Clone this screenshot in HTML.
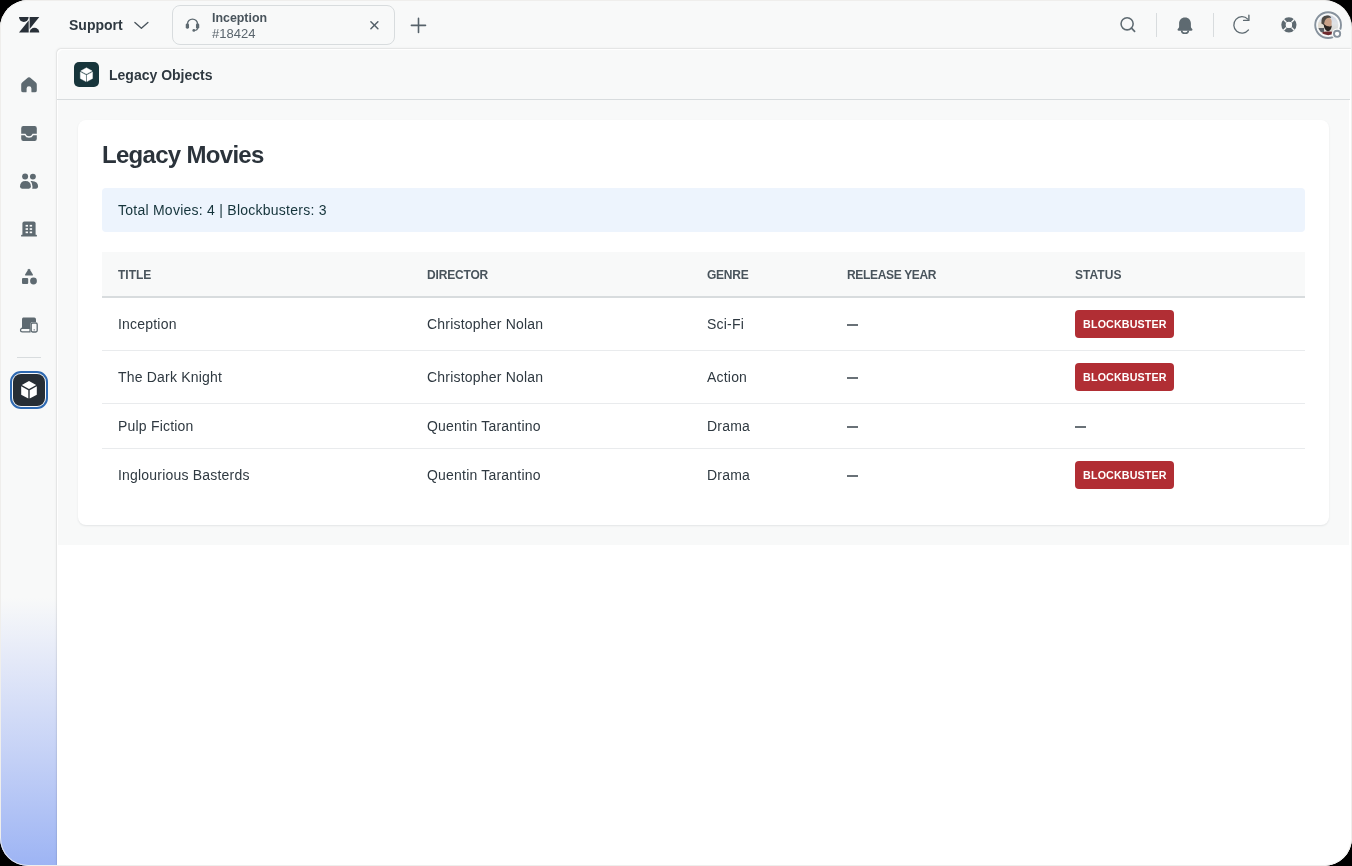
<!DOCTYPE html>
<html><head><meta charset="utf-8">
<style>
*{box-sizing:border-box;margin:0;padding:0}
html,body{width:1352px;height:866px;overflow:hidden;background:#000}
body{font-family:"Liberation Sans",sans-serif;color:#2f3941;position:relative;-webkit-font-smoothing:antialiased}
.t,.th,.td,.badge{will-change:transform}
.win{position:absolute;left:0;top:0;width:1352px;height:866px;border-radius:28px;background:#f8f9f9;overflow:hidden}
.frame{position:absolute;left:0;top:0;width:1352px;height:866px;border-radius:28px;border:1px solid #efeeec;pointer-events:none}
.abs{position:absolute}
svg{overflow:visible}
.side{position:absolute;left:0;top:0;width:57px;height:866px;background:linear-gradient(to bottom,#f8f9f9 0,#f8f9f9 598px,#e4e9f8 660px,#c3d0f6 760px,#9db4f4 866px)}
.panel{position:absolute;left:57px;top:49px;width:1295px;height:817px;background:#fff;border-top-left-radius:5px;box-shadow:-1px -1px 0 rgba(0,0,0,.045),-1px -1px 3px rgba(0,0,0,.05)}
.phead{position:absolute;left:0;top:0;width:1293px;height:51px;background:#f8f9f9;border-bottom:1px solid #d8dcde;border-top-left-radius:5px;box-shadow:inset 1px 1px 0 #fff}
.gray{position:absolute;left:0;top:51px;width:1292px;height:445px;background:#f8f9f9;box-shadow:inset 1px 0 0 #fff}
.card{position:absolute;left:21px;top:20px;width:1251px;height:405px;background:#fff;border-radius:8px;box-shadow:0 1px 2px rgba(47,57,65,.10)}
.t{position:absolute;white-space:nowrap}
.th{position:absolute;top:267.6px;font-size:12px;font-weight:bold;color:#49545c;white-space:nowrap;line-height:14px}
.td{position:absolute;font-size:14px;color:#2f3941;white-space:nowrap;line-height:16px;letter-spacing:.2px}
.dash{position:absolute;width:11px;height:1.5px;background:#697177}
.badge{position:absolute;left:1074.5px;width:99.2px;height:28px;background:#b12e34;border-radius:4px;color:#fff;font-size:10.7px;font-weight:bold;line-height:28px;text-align:center;letter-spacing:.15px;padding-left:.6px}
.rowline{position:absolute;left:102px;width:1203px;height:1px;background:#e9ebed}
</style></head><body>
<div class="win">
  <div class="side"></div>

  <!-- Zendesk logo -->
  <svg class="abs" style="left:19px;top:17px" width="20.3" height="15.7" viewBox="0 0 21 16">
    <path d="M0 0 H10 A5 5 0 0 1 0 0 Z" fill="#283038"/>
    <path d="M10 3.6 V16 H0 Z" fill="#283038"/>
    <path d="M11 0 H21 L11 12.4 Z" fill="#283038"/>
    <path d="M11 16 A5 5 0 0 1 21 16 Z" fill="#283038"/>
  </svg>

  <!-- Support -->
  <div class="t" style="left:69px;top:16px;font-size:14px;font-weight:bold;line-height:18px;color:#2f3941">Support</div>
  <svg class="abs" style="left:133px;top:20px" width="17" height="10" viewBox="0 0 17 10"><path d="M1.9 2.5 L8.4 8.2 L14.9 2.5" fill="none" stroke="#49545c" stroke-width="1.35" stroke-linecap="round" stroke-linejoin="round"/></svg>

  <!-- Tab -->
  <div class="abs" style="left:172px;top:5px;width:223px;height:40px;border:1px solid #d8dcde;border-radius:8px;background:#f8f9f9"></div>
  <svg class="abs" style="left:185px;top:17px" width="15" height="15" viewBox="0 0 16 16">
    <path d="M2.6 9 V7.6 A5.4 5.4 0 0 1 13.4 7.6 V9" fill="none" stroke="#5e6a71" stroke-width="1.35"/>
    <rect x="0.8" y="6.8" width="3.5" height="5.6" rx="1.5" fill="#5e6a71"/>
    <rect x="11.7" y="6.8" width="3.5" height="5.6" rx="1.5" fill="#5e6a71"/>
    <path d="M13.4 11.5 Q13.4 14.3 9.8 14.4" fill="none" stroke="#5e6a71" stroke-width="1.3"/>
    <circle cx="9.4" cy="14.3" r="1.5" fill="#5e6a71"/>
  </svg>
  <div class="t" style="left:212px;top:10.5px;font-size:12.4px;font-weight:bold;line-height:14px;color:#49545c">Inception</div>
  <div class="t" style="left:212px;top:26.5px;font-size:13px;line-height:14px;color:#5a656d">#18424</div>
  <svg class="abs" style="left:369px;top:20px" width="11" height="11" viewBox="0 0 11 11"><g fill="#56626a" transform="translate(5.4 5.2) rotate(45)"><rect x="-5.7" y="-0.75" width="11.4" height="1.5" rx=".75"/><rect x="-0.75" y="-5.7" width="1.5" height="11.4" rx=".75"/></g></svg>
  <svg class="abs" style="left:410px;top:17px" width="17" height="17" viewBox="0 0 17 17"><path d="M8.5 1.4 V15.4 M1.4 8.4 H15.5" stroke="#56626a" stroke-width="1.6" stroke-linecap="round"/></svg>

  <!-- right icons -->
  <svg class="abs" style="left:1119px;top:16px" width="18" height="18" viewBox="0 0 18 18"><circle cx="8.1" cy="7.8" r="6.05" fill="none" stroke="#5e6a71" stroke-width="1.55"/><path d="M12.5 12.2 L15.6 15.3" stroke="#5e6a71" stroke-width="1.7" stroke-linecap="round"/></svg>
  <div class="abs" style="left:1156px;top:13px;width:1px;height:24px;background:#d8dcde"></div>
  <svg class="abs" style="left:1176px;top:16.6px" width="18" height="18" viewBox="0 0 18 18">
    <path d="M9 0.6 C5.3 0.6 3.1 3.3 3.1 6.6 V9.4 Q3.1 10.6 2.2 11.6 L1.8 12.1 Q1.2 12.8 1.7 13.3 Q2 13.7 2.6 13.7 H15.4 Q16 13.7 16.3 13.3 Q16.8 12.8 16.2 12.1 L15.8 11.6 Q14.9 10.6 14.9 9.4 V6.6 C14.9 3.3 12.7 0.6 9 0.6 Z" fill="#5e6a71"/>
    <path d="M5.6 13.4 A3.4 2.9 0 0 0 12.4 13.4" fill="none" stroke="#5e6a71" stroke-width="1.6"/>
  </svg>
  <div class="abs" style="left:1213px;top:13px;width:1px;height:24px;background:#d8dcde"></div>
  <svg class="abs" style="left:1231px;top:14px" width="20" height="22" viewBox="0 0 20 22">
    <path d="M16.8 5.1 A8.2 8.2 0 1 0 17.5 15.95" fill="none" stroke="#5e6a71" stroke-width="1.3" stroke-linecap="round"/>
    <path d="M17.9 1.3 V6.4 H12.6" fill="none" stroke="#5e6a71" stroke-width="1.4" stroke-linecap="round" stroke-linejoin="round"/>
  </svg>
  <svg class="abs" style="left:1281px;top:17px" width="16" height="16" viewBox="0 0 16 16">
    <circle cx="7.9" cy="7.85" r="5.4" fill="none" stroke="#5e6a71" stroke-width="4.4"/>
    <path d="M2.3 2.25 L5.3 5.25 M13.5 2.25 L10.5 5.25 M2.3 13.45 L5.3 10.45 M13.5 13.45 L10.5 10.45" stroke="#f8f9f9" stroke-width="1.35"/>
    <rect x="5.05" y="5" width="5.7" height="5.7" rx="1.2" fill="#f8f9f9"/>
  </svg>
  <!-- avatar -->
  <svg class="abs" style="left:1312px;top:9px" width="32" height="32" viewBox="0 0 32 32">
    <defs>
      <clipPath id="av"><circle cx="16.2" cy="16.1" r="10.2"/></clipPath>
      <linearGradient id="sky" x1="0" y1="0" x2="0" y2="1"><stop offset="0" stop-color="#c3cde0"/><stop offset=".45" stop-color="#dfe2e6"/><stop offset=".7" stop-color="#d8d6d0"/><stop offset="1" stop-color="#8a8e92"/></linearGradient>
    </defs>
    <circle cx="16.1" cy="16.1" r="12.9" fill="none" stroke="#87929d" stroke-width="1.9"/>
    <g clip-path="url(#av)">
      <rect x="0" y="0" width="32" height="32" fill="url(#sky)"/>
      <rect x="4" y="13" width="8" height="6" fill="#e2ddd3"/>
      <rect x="4" y="19" width="8" height="4" fill="#5a6066"/>
      <path d="M7 32 Q8 23.5 12 22.8 Q17 22.3 21 22.8 V32 Z" fill="#6f2a2e"/>
      <path d="M11.2 11.5 Q11.5 8.3 15.2 8.2 Q19.6 8.5 19.7 12.5 Q19.9 17 18.6 19.5 Q15 21 12.5 18 Z" fill="#c9a188"/>
      <path d="M9.4 14.5 Q8.8 7 14 6.4 Q18.6 6.1 19.2 8.9 Q16 8.4 14.2 9.8 Q12.6 11.3 12.3 13.8 L11.8 16 Z" fill="#4f4a44"/>
      <path d="M11.6 14.8 Q12.2 21.8 15.8 22.2 Q19.6 22 19.7 16.6 Q18.3 18.2 16.6 17.3 Q14.2 17.6 12.6 15.6 Z" fill="#2a2421"/>
    </g>
    <circle cx="25.1" cy="24.8" r="5.4" fill="#f8f9f9"/>
    <circle cx="25.1" cy="24.8" r="3.1" fill="#fff" stroke="#87929d" stroke-width="1.9"/>
  </svg>

  <!-- sidebar icons -->
  <svg class="abs" style="left:21px;top:77px" width="16" height="16" viewBox="0 0 16 16">
    <path d="M7 0.6 Q8 -0.1 9 0.6 L14.6 5.2 Q15.8 6.2 15.8 7.6 V13.4 Q15.8 15.3 13.9 15.3 H11.3 Q10.4 15.3 10.4 14.4 V11.6 Q10.4 9.2 8 9.2 Q5.6 9.2 5.6 11.6 V14.4 Q5.6 15.3 4.7 15.3 H2.1 Q0.2 15.3 0.2 13.4 V7.6 Q0.2 6.2 1.4 5.2 Z" fill="#5e6a71"/>
  </svg>
  <svg class="abs" style="left:21px;top:125.5px" width="16" height="16" viewBox="0 0 16 16">
    <path d="M2.4 0 H13.6 Q15.8 0 15.8 2.2 V7.8 H11.6 Q10.4 10.3 8 10.3 Q5.6 10.3 4.4 7.8 H0.2 V2.2 Q0.2 0 2.4 0 Z" fill="#5e6a71"/>
    <path d="M0.2 9.2 H3.7 Q5 11.8 8 11.8 Q11 11.8 12.3 9.2 H15.8 V12.8 Q15.8 15 13.6 15 H2.4 Q0.2 15 0.2 12.8 Z" fill="#5e6a71"/>
  </svg>
  <svg class="abs" style="left:20px;top:173px" width="19" height="17" viewBox="0 0 19 17">
    <circle cx="5.1" cy="3.6" r="3" fill="#5e6a71"/>
    <circle cx="12.9" cy="3.6" r="2.95" fill="#5e6a71"/>
    <path d="M0 13.6 Q0 7.9 5.4 7.9 Q10.9 7.9 10.9 13.6 Q10.9 15.7 8.9 15.7 H2 Q0 15.7 0 13.6 Z" fill="#5e6a71"/>
    <path d="M11.6 7.9 Q18.1 8 18.1 13.6 Q18.1 15.7 16.1 15.7 H12.2 Q12.5 15 12.5 13.6 Q12.5 10 10.5 8 Q11 7.9 11.6 7.9 Z" fill="#5e6a71"/>
  </svg>
  <svg class="abs" style="left:21px;top:221px" width="16" height="16" viewBox="0 0 16 16">
    <path d="M3.4 0.4 H12.6 Q14.6 0.4 14.6 2.4 V14 H1.4 V2.4 Q1.4 0.4 3.4 0.4 Z" fill="#5e6a71"/>
    <rect x="0" y="13.8" width="16" height="1.8" rx=".9" fill="#5e6a71"/>
    <g fill="#f8f9f9"><rect x="4.6" y="3.9" width="2.4" height="1.7"/><rect x="8.7" y="3.9" width="2.4" height="1.7"/><rect x="4.6" y="7.2" width="2.4" height="1.7"/><rect x="8.7" y="7.2" width="2.4" height="1.7"/><rect x="4.6" y="10.5" width="2.4" height="1.7"/><rect x="8.7" y="10.5" width="2.4" height="1.7"/></g>
  </svg>
  <svg class="abs" style="left:22px;top:269px" width="16" height="16" viewBox="0 0 16 16">
    <path d="M6.3 0.2 Q7 -0.8 7.7 0.2 L10.9 5.6 Q11.4 6.6 10.3 6.6 H3.7 Q2.6 6.6 3.1 5.6 Z" fill="#5e6a71"/>
    <rect x="0" y="9" width="6.2" height="6" rx="1.1" fill="#5e6a71"/>
    <circle cx="11.5" cy="12" r="3.4" fill="#5e6a71"/>
  </svg>
  <svg class="abs" style="left:20px;top:317px" width="18" height="16" viewBox="0 0 18 16">
    <path d="M3.2 0.6 H14.2 Q16 0.6 16 2.4 V5 H12.5 Q10.5 5 10.5 7 V11.2 H2 V2.4 Q2 0.6 3.2 0.6 Z" fill="#5e6a71"/>
    <path d="M1.4 11.3 H10 V14.8 H2.4 Q0.5 14.8 0.5 12.9 Z" fill="none" stroke="#5e6a71" stroke-width="1.2"/>
    <rect x="11.2" y="6" width="6" height="9" rx="1.4" fill="none" stroke="#5e6a71" stroke-width="1.3"/>
    <rect x="13.6" y="12.3" width="1.2" height="1.1" fill="#5e6a71"/>
  </svg>
  <div class="abs" style="left:17px;top:357px;width:24px;height:1px;background:#d8dcde"></div>
  <!-- active -->
  <div class="abs" style="left:10px;top:371px;width:38px;height:38px;border-radius:11px;border:2.5px solid #2e69b1"></div>
  <div class="abs" style="left:13px;top:374px;width:32px;height:32px;border-radius:8px;background:#272e35"></div>
  <svg class="abs" style="left:20px;top:380px" width="18" height="20" viewBox="0 0 18 20">
    <path d="M9 1 L16.2 5 L9 9 L1.8 5 Z" fill="#fff"/>
    <path d="M1.2 6.3 L8.3 10.2 V18.6 L1.2 14.7 Z" fill="#fff"/>
    <path d="M16.8 6.3 L9.7 10.2 V18.6 L16.8 14.7 Z" fill="#fff"/>
  </svg>

  <!-- panel -->
  <div class="panel">
    <div class="phead"></div>
    <div class="gray"><div class="card"></div></div>
  </div>

  <!-- header -->
  <div class="abs" style="left:74px;top:62px;width:25px;height:25px;border-radius:5px;background:#17353b"></div>
  <svg class="abs" style="left:79.1px;top:66.7px" width="14.9" height="15.7" viewBox="0 0 18 20">
    <path d="M9 1 L16.2 5 L9 9 L1.8 5 Z" fill="#fff" stroke="#fff" stroke-width=".6" stroke-linejoin="round"/>
    <path d="M1.2 6.3 L8.4 10.2 V18.6 L1.2 14.7 Z" fill="#fff" stroke="#fff" stroke-width=".5" stroke-linejoin="round"/>
    <path d="M16.8 6.3 L9.6 10.2 V18.6 L16.8 14.7 Z" fill="#fff" stroke="#fff" stroke-width=".5" stroke-linejoin="round"/>
  </svg>
  <div class="t" style="left:109px;top:67px;font-size:14px;font-weight:bold;line-height:16px;color:#2f3941">Legacy Objects</div>

  <!-- card content -->
  <div class="t" style="left:102px;top:141px;font-size:24px;font-weight:bold;line-height:28px;color:#2b333b;letter-spacing:-0.7px">Legacy Movies</div>
  <div class="abs" style="left:102px;top:188px;width:1203px;height:44px;background:#edf4fd;border-radius:4px"></div>
  <div class="t" style="left:118px;top:202px;font-size:14px;line-height:16px;color:#15343b;letter-spacing:.25px">Total Movies: 4 | Blockbusters: 3</div>

  <div class="abs" style="left:102px;top:252px;width:1203px;height:46px;background:#f8f9f9;border-bottom:2px solid #d8dcde"></div>
  <div class="th" style="left:118px">TITLE</div>
  <div class="th" style="left:426.5px;letter-spacing:-.17px">DIRECTOR</div>
  <div class="th" style="left:706.7px;letter-spacing:-.25px">GENRE</div>
  <div class="th" style="left:846.5px;letter-spacing:-.33px">RELEASE YEAR</div>
  <div class="th" style="left:1074.7px;letter-spacing:.05px">STATUS</div>

  <!-- row 1 -->
  <div class="td" style="left:118px;top:316px">Inception</div>
  <div class="td" style="left:426.5px;top:316px">Christopher Nolan</div>
  <div class="td" style="left:706.7px;top:316px">Sci-Fi</div>
  <div class="dash" style="left:847px;top:324px"></div>
  <div class="badge" style="top:310px">BLOCKBUSTER</div>
  <div class="rowline" style="top:350px"></div>
  <!-- row 2 -->
  <div class="td" style="left:118px;top:369px">The Dark Knight</div>
  <div class="td" style="left:426.5px;top:369px">Christopher Nolan</div>
  <div class="td" style="left:706.7px;top:369px">Action</div>
  <div class="dash" style="left:847px;top:377px"></div>
  <div class="badge" style="top:363px">BLOCKBUSTER</div>
  <div class="rowline" style="top:403px"></div>
  <!-- row 3 -->
  <div class="td" style="left:118px;top:418px">Pulp Fiction</div>
  <div class="td" style="left:426.5px;top:418px">Quentin Tarantino</div>
  <div class="td" style="left:706.7px;top:418px">Drama</div>
  <div class="dash" style="left:847px;top:426px"></div>
  <div class="dash" style="left:1075px;top:426px"></div>
  <div class="rowline" style="top:448px"></div>
  <!-- row 4 -->
  <div class="td" style="left:118px;top:467px">Inglourious Basterds</div>
  <div class="td" style="left:426.5px;top:467px">Quentin Tarantino</div>
  <div class="td" style="left:706.7px;top:467px">Drama</div>
  <div class="dash" style="left:847px;top:475px"></div>
  <div class="badge" style="top:461px">BLOCKBUSTER</div>

  <div class="frame"></div>
</div>
</body></html>
